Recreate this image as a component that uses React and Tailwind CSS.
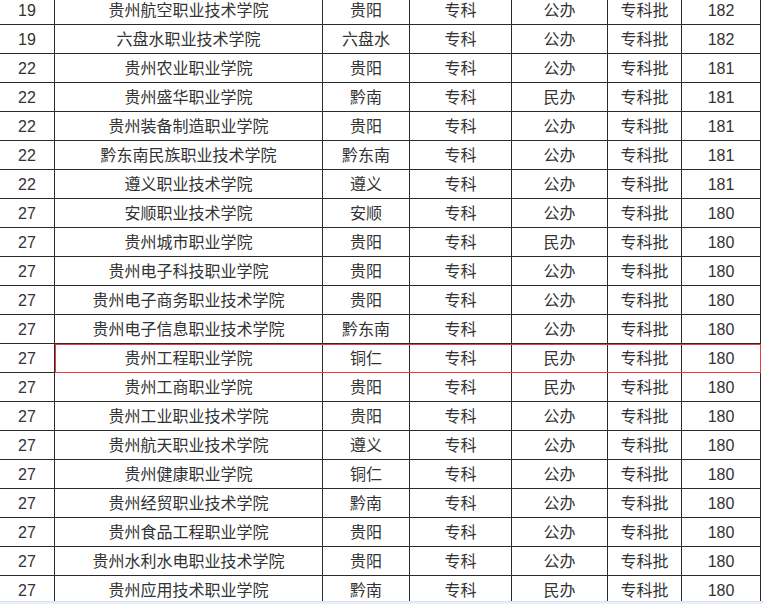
import React from 'react';

const rows = [
  ['19', '贵州航空职业技术学院', '贵阳', '公办', '182'],
  ['19', '六盘水职业技术学院', '六盘水', '公办', '182'],
  ['22', '贵州农业职业学院', '贵阳', '公办', '181'],
  ['22', '贵州盛华职业学院', '黔南', '民办', '181'],
  ['22', '贵州装备制造职业学院', '贵阳', '公办', '181'],
  ['22', '黔东南民族职业技术学院', '黔东南', '公办', '181'],
  ['22', '遵义职业技术学院', '遵义', '公办', '181'],
  ['27', '安顺职业技术学院', '安顺', '公办', '180'],
  ['27', '贵州城市职业学院', '贵阳', '民办', '180'],
  ['27', '贵州电子科技职业学院', '贵阳', '公办', '180'],
  ['27', '贵州电子商务职业技术学院', '贵阳', '公办', '180'],
  ['27', '贵州电子信息职业技术学院', '黔东南', '公办', '180'],
  ['27', '贵州工程职业学院', '铜仁', '民办', '180'],
  ['27', '贵州工商职业学院', '贵阳', '民办', '180'],
  ['27', '贵州工业职业技术学院', '贵阳', '公办', '180'],
  ['27', '贵州航天职业技术学院', '遵义', '公办', '180'],
  ['27', '贵州健康职业学院', '铜仁', '公办', '180'],
  ['27', '贵州经贸职业技术学院', '黔南', '公办', '180'],
  ['27', '贵州食品工程职业学院', '贵阳', '公办', '180'],
  ['27', '贵州水利水电职业技术学院', '贵阳', '公办', '180'],
  ['27', '贵州应用技术职业学院', '黔南', '民办', '180'],
];

const HIGHLIGHT = 12;

const Cell = ({ w, children }) => (
  <div className={`${w} shrink-0 h-full pt-[2px] flex items-center justify-center border-r border-[#2b2b2b]`}>
    {children}
  </div>
);

const App = () => {
  return (
    <div
      className="w-[763px] h-[604px] overflow-hidden bg-white flex flex-col text-[16px] text-[#333]"
      style={{ fontFamily: '"Liberation Sans", "Noto Sans CJK SC", sans-serif' }}
    >
      <div className="h-[601px] overflow-hidden">
        <div className="-mt-[4px] w-[761px]">
          {rows.map((r, i) => (
            <div key={i} className="relative flex h-[29px] border-b border-[#2b2b2b] leading-none">
              <Cell w="w-[55px]">{r[0]}</Cell>
              <Cell w="w-[268px]">{r[1]}</Cell>
              <Cell w="w-[87px]">{r[2]}</Cell>
              <Cell w="w-[102px]">专科</Cell>
              <Cell w="w-[96px]">{r[3]}</Cell>
              <Cell w="w-[74px]">专科批</Cell>
              <Cell w="w-[79px]">{r[4]}</Cell>
              {i === HIGHLIGHT && (
                <span className="absolute left-[55px] right-0 top-0 -bottom-[1px] border border-[#f03a3a] pointer-events-none" />
              )}
            </div>
          ))}
        </div>
      </div>
      <div className="h-[3px] bg-[#eaf0f9] border-t border-[#d5dfee]" />
    </div>
  );
};

export default App;
